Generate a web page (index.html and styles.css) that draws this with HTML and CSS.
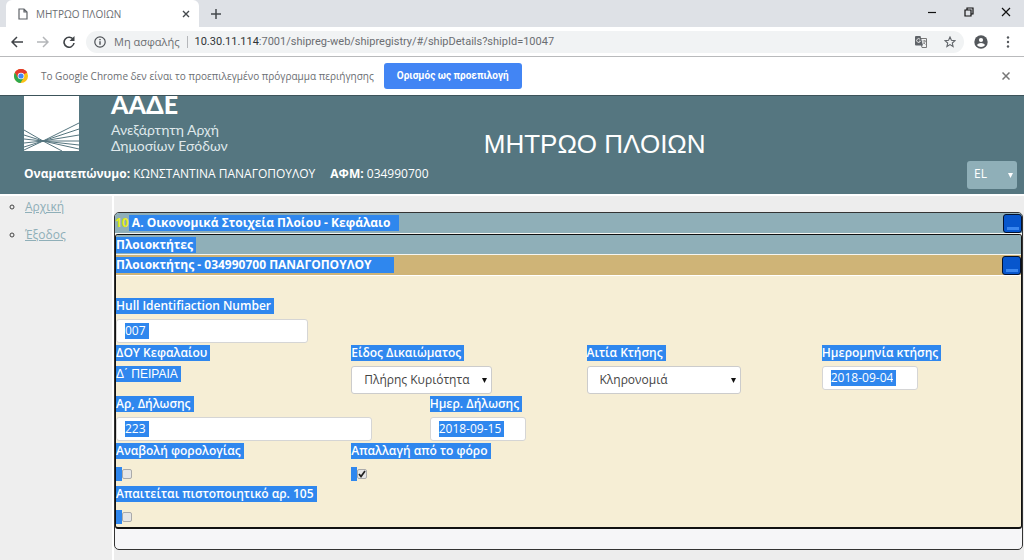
FILE: index.html
```html
<!DOCTYPE html>
<html lang="el">
<head>
<meta charset="utf-8">
<title>ΜΗΤΡΩΟ ΠΛΟΙΩΝ</title>
<link rel="stylesheet" href="styles.css">
</head>
<body>
<div class="browser">
  <div class="tabstrip">
    <div class="tab">
      <svg class="page-icon" width="10" height="12" viewBox="0 0 10 12" fill="none" stroke="#5f6368" stroke-width="1.2"><path d="M1 1h5l3 3v7H1zM6 1v3h3"/></svg>
      <span class="tab-title">ΜΗΤΡΩΟ ΠΛΟΙΩΝ</span>
      <button class="icon-button" aria-label="Κλείσιμο καρτέλας"><svg width="8" height="8" viewBox="0 0 8 8" stroke="#45494d" stroke-width="1.4"><path d="M1 1l6 6M7 1l-6 6"/></svg></button>
    </div>
    <button class="icon-button new-tab" aria-label="Νέα καρτέλα"><svg width="10" height="10" viewBox="0 0 10 10" stroke="#45494d" stroke-width="1.5"><path d="M5 0v10M0 5h10"/></svg></button>
    <div class="window-controls">
      <button class="icon-button" aria-label="Ελαχιστοποίηση"><svg width="10" height="10" viewBox="0 0 10 10" stroke="#111" stroke-width="1.2"><path d="M1 5.5h8"/></svg></button>
      <button class="icon-button" aria-label="Επαναφορά"><svg width="10" height="10" viewBox="0 0 10 10" fill="none" stroke="#111" stroke-width="1.2"><path d="M1 3h6v6H1zM3 3V1h6v6H7"/></svg></button>
      <button class="icon-button" aria-label="Κλείσιμο"><svg width="10" height="10" viewBox="0 0 10 10" stroke="#111" stroke-width="1.2"><path d="M1 1l8 8M9 1l-8 8"/></svg></button>
    </div>
  </div>
  <div class="toolbar">
    <button class="icon-button" aria-label="Πίσω"><svg width="12" height="12" viewBox="0 0 12 12" fill="none" stroke="#3f4347" stroke-width="1.5"><path d="M12 6H1M6 1L1 6l5 5"/></svg></button>
    <button class="icon-button" aria-label="Εμπρός"><svg width="12" height="12" viewBox="0 0 12 12" fill="none" stroke="#b4b6b9" stroke-width="1.5"><path d="M0 6h11M6 1l5 5-5 5"/></svg></button>
    <button class="icon-button" aria-label="Ανανέωση"><svg width="12" height="12" viewBox="0 0 12 12" fill="none" stroke="#3f4347" stroke-width="1.6"><path d="M10.3 3.6A5 5 0 1 0 11 7"/><path d="M11.5 0v5h-5z" fill="#3f4347" stroke="none"/></svg></button>
    <div class="address">
      <svg width="12" height="12" viewBox="0 0 12 12" fill="none" stroke="#4d5156" stroke-width="1.2"><circle cx="6" cy="6" r="5.2"/><path d="M6 5.2v3.6M6 2.9v1.3" stroke-width="1.4"/></svg>
      <span class="security">Μη ασφαλής</span>
      <span class="url"><span class="host">10.30.11.114</span>:7001/shipreg-web/shipregistry/#/shipDetails?shipId=10047</span>
      <button class="icon-button" aria-label="Μετάφραση"><svg width="12" height="12" viewBox="0 0 12 12"><path d="M4.500 2.500h7v9H7z" fill="#f1f3f4" stroke="#777"/><path d="M0 1q0-1 1-1h4.500L8 9.500H1Q0 9.500 0 8.500z" fill="#5f6368"/><path d="M5.200 3.500A1.900 1.900 0 1 0 5.400 5.200H4" fill="none" stroke="#fff" stroke-width=".8"/><path d="M7.500 5h3.500M9.300 4v1M10.300 5q-.5 2-2 3M8.500 6.500l2 2" fill="none" stroke="#777" stroke-width=".8"/></svg></button>
      <button class="icon-button" aria-label="Σελιδοδείκτης"><svg width="12" height="12" viewBox="0 0 12 12" fill="none" stroke="#5f6368" stroke-width="1.1"><path d="M6 1l1.400 3.300 3.600.3-2.700 2.400.8 3.500L6 8.600l-3.100 1.900.8-3.500L1 4.600l3.600-.3z"/></svg></button>
    </div>
    <button class="icon-button profile" aria-label="Προφίλ"><svg width="14" height="14" viewBox="0 0 14 14"><circle cx="7" cy="7" r="6.700" fill="#54585c"/><circle cx="7" cy="5" r="2.100" fill="#fff"/><path d="M2.800 10Q4.500 7.900 7 7.900T11.200 10Q9.500 12 7 12T2.800 10z" fill="#fff"/></svg></button>
    <button class="icon-button" aria-label="Μενού"><svg width="4" height="12" viewBox="0 0 4 12" fill="#54585c"><circle cx="2" cy="1.500" r="1.200"/><circle cx="2" cy="6" r="1.200"/><circle cx="2" cy="10.500" r="1.200"/></svg></button>
  </div>
  <div class="infobar">
    <svg width="14" height="14" viewBox="0 0 14 14"><circle cx="7" cy="7" r="7" fill="#fbc116"/><path d="M7 7L.94 3.500A7 7 0 0 1 13.060 3.500z" fill="#e33b2e"/><path d="M.94 3.500A7 7 0 0 0 6.500 14L9.600 8.700 4.300 8.500z" fill="#2da94f"/><path d="M7 3.500h6.060a7 7 0 0 0-12.120 0L4 8.700z" fill="#e33b2e"/><circle cx="7" cy="7" r="3.300" fill="#fff"/><circle cx="7" cy="7" r="2.600" fill="#4285f4"/></svg>
    <span>Το Google Chrome δεν είναι το προεπιλεγμένο πρόγραμμα περιήγησης</span>
    <button class="default-button">Ορισμός ως προεπιλογή</button>
    <button class="icon-button infobar-close" aria-label="Απόρριψη"><svg width="8" height="8" viewBox="0 0 8 8" stroke="#777" stroke-width="1.500"><path d="M.5.5l7 7M7.500.5l-7 7"/></svg></button>
  </div>
</div>

<header class="site-header">
  <div class="brand">
    <svg class="brand-mark" width="55" height="60" viewBox="0 0 55 60"><path d="M0 0h55v60H0z" fill="#fff"/><g fill="none" stroke="#55757f" stroke-width="1"><path d="M0 39l19 11L55 32M0 44l19 6 36-12M0 48l19 2 36-6M0 52l19-2h36M0 56l19-6 36 4M0 59l19-9 36 8M19 50l19 10"/></g><ellipse cx="19" cy="50" rx="4" ry="1" fill="#55757f"/></svg>
    <div class="brand-text">
      <strong class="brand-name">ΑΑΔΕ</strong>
      <span>Ανεξάρτητη Αρχή</span>
      <span>Δημοσίων Εσόδων</span>
    </div>
  </div>
  <h1 class="site-title">ΜΗΤΡΩΟ ΠΛΟΙΩΝ</h1>
  <div class="user">
    <span><b>Οναματεπώνυμο:</b> ΚΩΝΣΤΑΝΤΙΝΑ ΠΑΝΑΓΟΠΟΥΛΟΥ</span>
    <span><b>ΑΦΜ:</b> 034990700</span>
  </div>
  <select class="select language" aria-label="Γλώσσα"><option>EL</option></select>
</header>

<div class="layout">
  <nav class="sidebar">
    <ul class="menu">
      <li><a href="#home">Αρχική</a></li>
      <li><a href="#exit">Έξοδος</a></li>
    </ul>
  </nav>
  <main class="main">
    <section class="panel">
      <div class="bar bar-top">
        <h2 class="bar-title"><span class="count">10</span><span class="mark mark-wide">&nbsp;Α. Οικονομικά Στοιχεία Πλοίου - Κεφάλαιο</span></h2>
        <button class="collapse" aria-label="Σύμπτυξη κεφαλαίου"></button>
      </div>
      <div class="panel-body">
        <div class="bar"><h3 class="bar-title"><span class="mark">Πλοιοκτήτες</span></h3></div>
        <div class="bar bar-gold">
          <h4 class="bar-title"><span class="mark mark-owner">Πλοιοκτήτης - 034990700 ΠΑΝΑΓΟΠΟΥΛΟΥ</span></h4>
          <button class="collapse" aria-label="Σύμπτυξη πλοιοκτήτη"></button>
        </div>
        <form class="form">
          <div class="row">
            <div class="field"><label class="mark" for="hull">Hull Identifiaction Number</label><span class="box box-medium"><input class="mark value" id="hull" value="007"></span></div>
          </div>
          <div class="row">
            <div class="field"><span class="mark label">ΔΟΥ Κεφαλαίου</span><span class="mark static">Δ΄ ΠΕΙΡΑΙΑ</span></div>
            <div class="field"><label class="mark" for="right">Είδος Δικαιώματος</label><select class="select right" id="right"><option>Πλήρης Κυριότητα</option></select></div>
            <div class="field"><label class="mark" for="cause">Αιτία Κτήσης</label><select class="select cause" id="cause"><option>Κληρονομιά</option></select></div>
            <div class="field"><label class="mark" for="acquired">Ημερομηνία κτήσης</label><span class="box box-date"><input class="mark value" id="acquired" value="2018-09-04"></span></div>
          </div>
          <div class="row">
            <div class="field field-third"><label class="mark" for="number">Αρ, Δήλωσης</label><span class="box box-long"><input class="mark value" id="number" value="223"></span></div>
            <div class="field field-third"><label class="mark" for="declared">Ημερ. Δήλωσης</label><span class="box box-date"><input class="mark value" id="declared" value="2018-09-15"></span></div>
          </div>
          <div class="row">
            <div class="field"><label class="mark" for="defer">Αναβολή φορολογίας</label><span class="tick"><input class="checkbox" type="checkbox" id="defer"></span></div>
            <div class="field"><label class="mark" for="exempt">Απαλλαγή από το φόρο</label><span class="tick"><input class="checkbox" type="checkbox" id="exempt" checked></span></div>
          </div>
          <div class="row">
            <div class="field field-half"><label class="mark" for="cert">Απαιτείται πιστοποιητικό αρ. 105</label><span class="tick"><input class="checkbox" type="checkbox" id="cert"></span></div>
          </div>
        </form>
      </div>
      <div class="panel-footer"></div>
    </section>
  </main>
</div>
</body>
</html>
```
FILE: styles.css
```css
* { box-sizing: border-box; }

body {
  margin: 0;
  height: 100vh;
  display: flex;
  flex-direction: column;
  overflow: hidden;
  background: #fff;
  color: #444;
  font: 12px/16px "Open Sans", "Noto Sans", sans-serif;
}

button, input, select { font: inherit; margin: 0; }

/* Browser window */
.browser {
  position: relative;
  z-index: 1;
  background: #fff;
  color: #6b6e72;
  font-size: 11px;
  border-bottom: 1px solid #3c535a;
}

.icon-button {
  display: flex;
  align-items: center;
  justify-content: center;
  padding: 0;
  border: 0;
  background: none;
}

.tabstrip {
  display: flex;
  align-items: center;
  height: 27px;
  padding-left: 6px;
  background: #dee1e6;
}

.tab {
  display: flex;
  align-items: center;
  align-self: stretch;
  width: 193px;
  padding: 0 9px 0 12px;
  gap: 8px;
  background: #fff;
  border-radius: 6px 6px 0 0;
}

.tab-title { flex: 1; font-size: 10px; }
.new-tab { margin-left: 12px; }

.window-controls {
  display: flex;
  gap: 27px;
  margin-left: auto;
  padding: 0 13px 4px 0;
}

.toolbar {
  display: flex;
  align-items: center;
  gap: 14px;
  height: 30px;
  padding: 0 14px 0 11px;
  border-bottom: 1px solid #b9babc;
}

.address {
  flex: 1;
  display: flex;
  align-items: center;
  gap: 8px;
  height: 22px;
  margin-left: -3px;
  padding: 0 8px;
  border-radius: 11px;
  background: #f1f3f4;
}

.address .icon-button + .icon-button { margin-left: 9px; }
.security { padding-right: 7px; border-right: 1px solid #b5b7ba; line-height: 12px; }
.url { flex: 1; margin-left: -1px; font-family: Roboto, sans-serif; }
.host { color: #303336; }
.profile { margin: 0 4px 0 -4px; }

.infobar {
  display: flex;
  align-items: center;
  height: 38px;
  padding: 0 14px;
  gap: 13px;
  font-size: 10px;
}

.default-button {
  height: 26px;
  padding: 0 13px;
  margin-left: -3px;
  border: 0;
  border-radius: 3px;
  background: #4285f4;
  color: #fff;
  font-family: Roboto, sans-serif;
  font-weight: 700;
}

.infobar-close { margin-left: auto; }

/* Site header */
.site-header {
  display: grid;
  grid-template-columns: 46% 1fr auto;
  row-gap: 3px;
  margin-top: -5px;
  padding: 0 7px 5px 24px;
  background: #557680;
  border-bottom: 2px solid #fff;
  color: #fff;
}

.brand { display: flex; gap: 32px; height: 67px; }
.brand-text { display: flex; flex-direction: column; color: #dfe8eb; font: 14px/16px Lato, sans-serif; }
.brand-name { margin-bottom: 5px; color: #fff; font-size: 25px; font-weight: 900; line-height: 26px; }

.site-title {
  grid-column: 2 / 4;
  align-self: end;
  margin: 0;
  padding-left: 3px;
  font: 26px/28px "Liberation Sans", Arial, sans-serif;
}

.user { grid-column: 1 / 3; display: flex; gap: 15px; padding-top: 5px; }

.select {
  appearance: none;
  height: 28px;
  padding: 0 12px;
  border: 1px solid #ccc;
  border-radius: 3px;
  color: #444;
  background: #fff url("data:image/svg+xml,%3Csvg xmlns='http://www.w3.org/2000/svg' width='5' height='5'%3E%3Cpath d='M0 0h5L2.500 5z' fill='%23111'/%3E%3C/svg%3E") no-repeat right 4px center;
}

.language {
  width: 50px;
  padding: 0 7px 3px;
  border: 0;
  color: #fff;
  background-color: #8fafb8;
  background-image: url("data:image/svg+xml,%3Csvg xmlns='http://www.w3.org/2000/svg' width='5' height='5'%3E%3Cpath d='M0 0h5L2.500 5z' fill='%23fff'/%3E%3C/svg%3E");
}

/* Page */
.layout { flex: 1; display: flex; gap: 2px; }
.sidebar { width: 112px; background: #eee; }
.menu { display: flex; flex-direction: column; gap: 12px; margin: 0; padding: 3px 0 0 25px; list-style: circle; }
.menu a { color: #8fafb8; }
.main { flex: 1; padding: 16px 1px 0 0; background: #ededed; }

.panel { border: 1px solid #333; border-radius: 5px; overflow: hidden; background: #f6f6f8; }
.panel-body { border: 1px solid #111; border-width: 1px 1px 2px; border-radius: 3px; background: #f6eed5; overflow: hidden; }
.panel-footer { height: 20px; }

.bar {
  display: flex;
  align-items: center;
  justify-content: space-between;
  height: 20px;
  background: #8fafb8;
  border-bottom: 1px solid #f5f5f0;
}
.bar-top { height: 21px; }
.bar-gold { background: #cfb477; height: 21px; border-bottom-color: #fff; }
.bar-title { display: flex; margin: 0; font-size: 12px; line-height: 16px; }
.count { color: #e6ec1c; }

.mark { padding-right: 3px; background: #2f87ee; color: #fff; }
.mark-wide { padding-right: 9px; }
.mark-owner { padding-right: 22px; }

.collapse {
  width: 19px;
  height: 19px;
  padding: 0;
  border: 1px solid #04122e;
  border-radius: 3px;
  background: linear-gradient(#3a86ef, #3a86ef) no-repeat center 12px / 12px 3px #0756cd;
}

.form { display: flex; flex-direction: column; gap: 2px; padding-top: 22px; margin-right: -36px; }
.row { display: grid; grid-template-columns: repeat(12, minmax(0, 1fr)); }
.field { grid-column: span 3; display: flex; flex-direction: column; align-items: flex-start; gap: 5px; }
.field-third { grid-column: span 4; }
.field-half { grid-column: span 6; }
.field label, .label { font-weight: 600; }
.static { font-family: "Liberation Sans", Arial, sans-serif; }

.box { display: flex; align-items: center; height: 24px; padding: 0 8px; border: 1px solid #d5d5d5; border-radius: 3px; background: #fff; }
.box-medium { width: 192px; }
.box-long { width: 256px; }
.box-date { width: 96px; }
.value { field-sizing: content; height: 16px; border: 0; padding-top: 0; padding-bottom: 0; padding-left: 0; }
.right { width: 141px; }
.cause { width: 154px; }

.tick { display: flex; align-items: center; height: 20px; }
.tick::before { content: ""; width: 6px; height: 14px; background: #2f87ee; }
.checkbox {
  appearance: none;
  width: 10px;
  height: 10px;
  border: 1px solid #aaa;
  border-radius: 2px;
  background: #e6e6e6;
}
.checkbox:checked { background: #e6e6e6 url("data:image/svg+xml,%3Csvg xmlns='http://www.w3.org/2000/svg' viewBox='0 0 8 8'%3E%3Cpath d='M1 4l2 2.500L7 1' fill='none' stroke='%23222' stroke-width='1.700'/%3E%3C/svg%3E"); }
```
